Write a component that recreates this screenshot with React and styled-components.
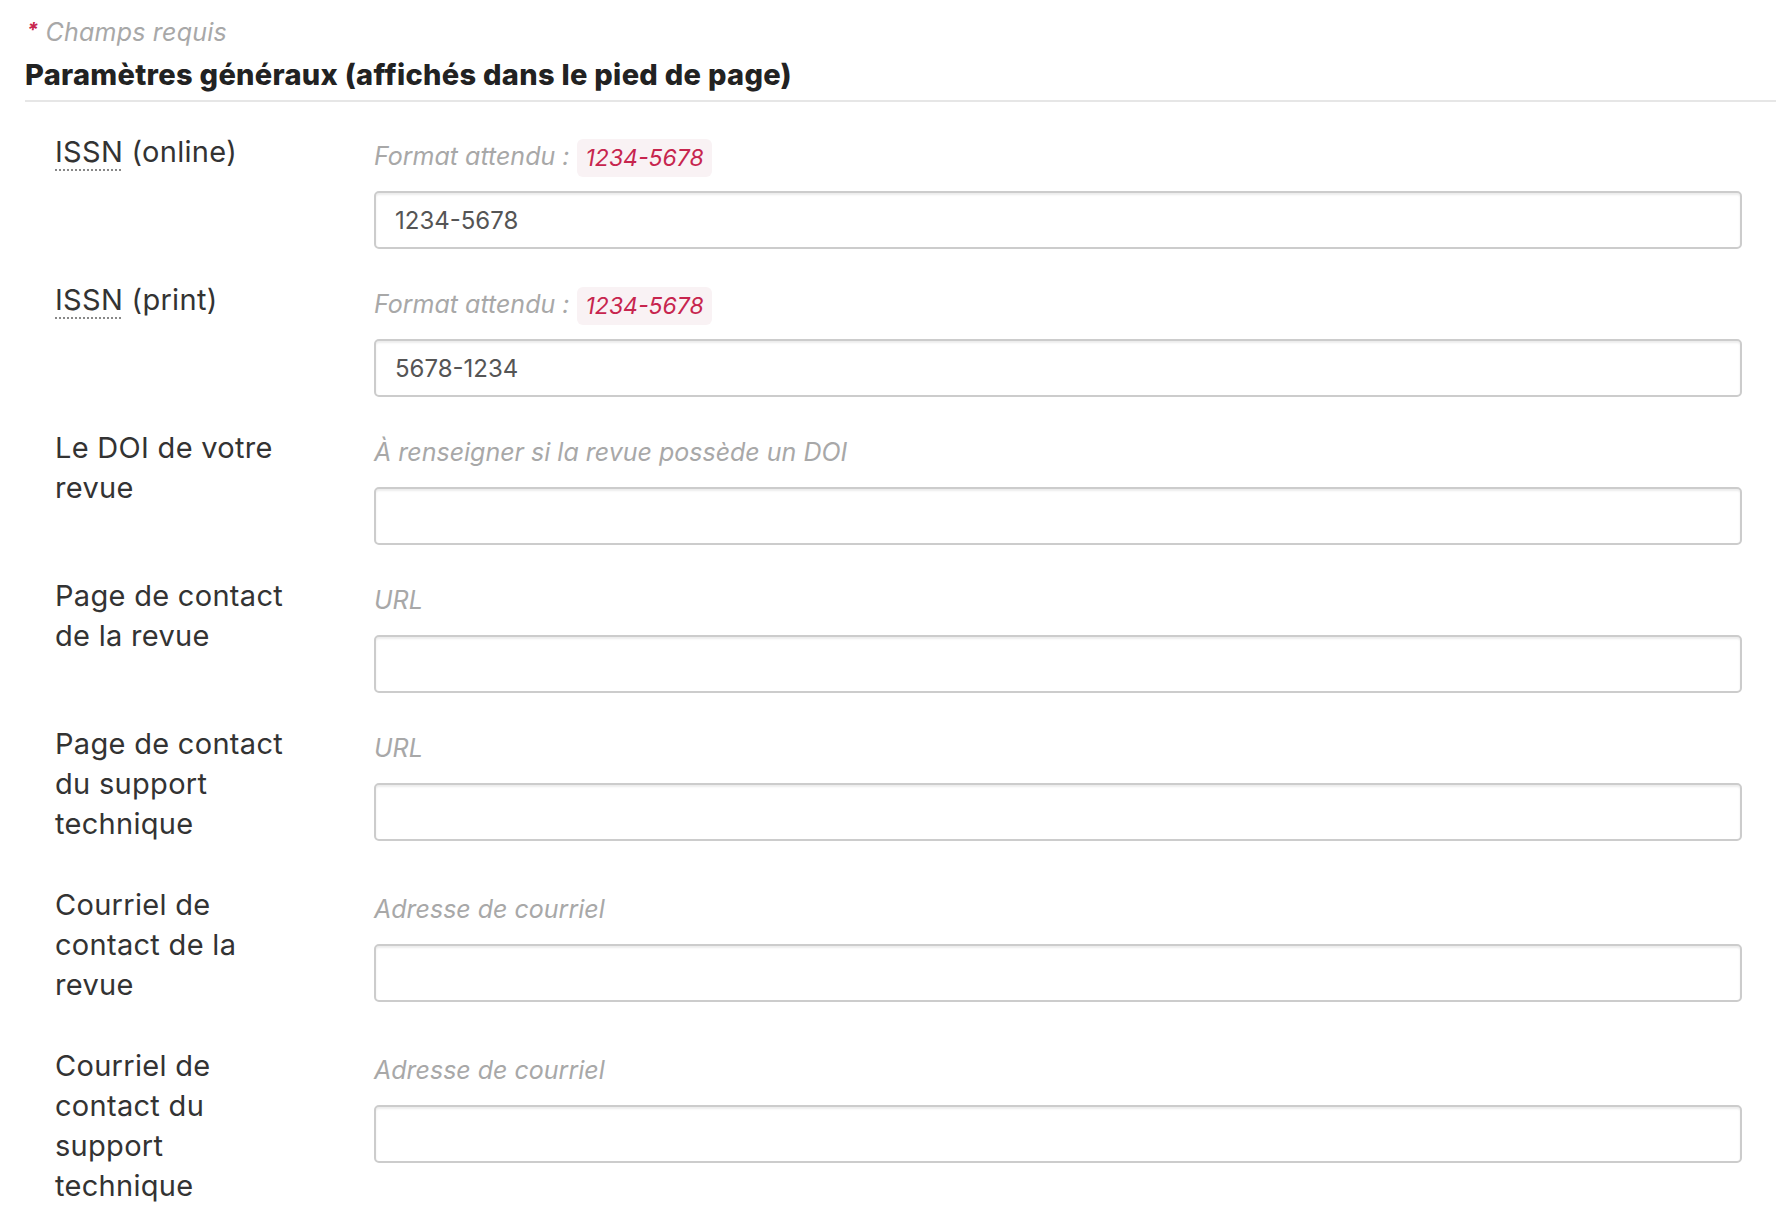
import React from 'react';
import styled, { createGlobalStyle } from 'styled-components';

const GlobalStyle = createGlobalStyle`
  html, body {
    margin: 0;
    padding: 0;
    background: #ffffff;
  }
  body {
    font-family: Inter, "Noto Sans", "Liberation Sans", sans-serif;
    color: #333333;
  }
`;

const Page = styled.div`
  padding: 12px 0 40px 25px;
`;

const Required = styled.div`
  font-size: 25px;
  line-height: 36px;
  font-style: italic;
  color: #a8a8a8;
  padding-left: 2px;
  letter-spacing: 0.2px;
`;

const Star = styled.span`
  color: #c7254e;
  font-size: 20px;
  font-weight: 700;
  vertical-align: 4px;
`;

const SectionTitle = styled.h2`
  margin: 0;
  padding: 5px 0 5px;
  font-size: 29px;
  font-weight: 800;
  line-height: 40px;
  letter-spacing: 0.3px;
  color: #222222;
  border-bottom: 2px solid #e6e6e6;
`;

const Form = styled.div`
  padding: 24px 34px 0 30px;
`;

const Row = styled.div`
  display: grid;
  grid-template-columns: 319px 1fr;
  margin-bottom: 25px;
`;

const Label = styled.label`
  padding: 6px 0 10px;
  font-size: 29px;
  line-height: 40px;
  letter-spacing: 0.3px;
  color: #333333;
`;

const LabelText = styled.span`
  display: block;
  max-width: 245px;
`;

const Abbr = styled.abbr`
  text-decoration: underline dotted #888888;
  text-decoration-thickness: 2px;
  text-underline-offset: 7px;
  cursor: help;
`;

const Field = styled.div`
  display: flex;
  flex-direction: column;
`;

const Hint = styled.div`
  margin-top: 10px;
  height: 40px;
  display: flex;
  align-items: center;
  gap: 8px;
  font-size: 25px;
  font-style: italic;
  color: #a8a8a8;
`;

const Code = styled.code`
  font-family: inherit;
  font-size: 23px;
  line-height: 38px;
  padding: 0 8px;
  margin-top: 4px;
  border-radius: 6px;
  background: #f9f2f4;
  color: #c7254e;
`;

const Input = styled.input`
  margin-top: 15px;
  height: 58px;
  width: 100%;
  box-sizing: border-box;
  padding: 0 19px;
  border: 2px solid #cccccc;
  border-radius: 5px;
  box-shadow: inset 0 2px 2px rgba(0, 0, 0, 0.075);
  font-family: inherit;
  font-size: 24px;
  color: #555555;
  background: #ffffff;
  outline: none;
`;

const issn = <Abbr title="International Standard Serial Number">ISSN</Abbr>;

const fields = [
  { id: 'issn-online', label: <>{issn} (online)</>, hint: 'Format attendu :', code: '1234-5678', value: '1234-5678' },
  { id: 'issn-print', label: <>{issn} (print)</>, hint: 'Format attendu :', code: '1234-5678', value: '5678-1234' },
  { id: 'doi', label: 'Le DOI de votre revue', hint: 'À renseigner si la revue possède un DOI' },
  { id: 'contact-page', label: 'Page de contact de la revue', hint: 'URL' },
  { id: 'support-page', label: 'Page de contact du support technique', hint: 'URL' },
  { id: 'contact-mail', label: 'Courriel de contact de la revue', hint: 'Adresse de courriel' },
  { id: 'support-mail', label: 'Courriel de contact du support technique', hint: 'Adresse de courriel' },
];

const App = () => {
  return (
    <>
      <GlobalStyle />
      <Page>
        <Required>
          <Star>*</Star> Champs requis
        </Required>
        <SectionTitle>Paramètres généraux (affichés dans le pied de page)</SectionTitle>
        <Form>
          {fields.map(field => (
            <Row key={field.id}>
              <Label htmlFor={field.id}>
                <LabelText>{field.label}</LabelText>
              </Label>
              <Field>
                <Hint>
                  {field.hint}
                  {field.code && <Code>{field.code}</Code>}
                </Hint>
                <Input id={field.id} type="text" defaultValue={field.value || ''} />
              </Field>
            </Row>
          ))}
        </Form>
      </Page>
    </>
  );
};

export default App;
